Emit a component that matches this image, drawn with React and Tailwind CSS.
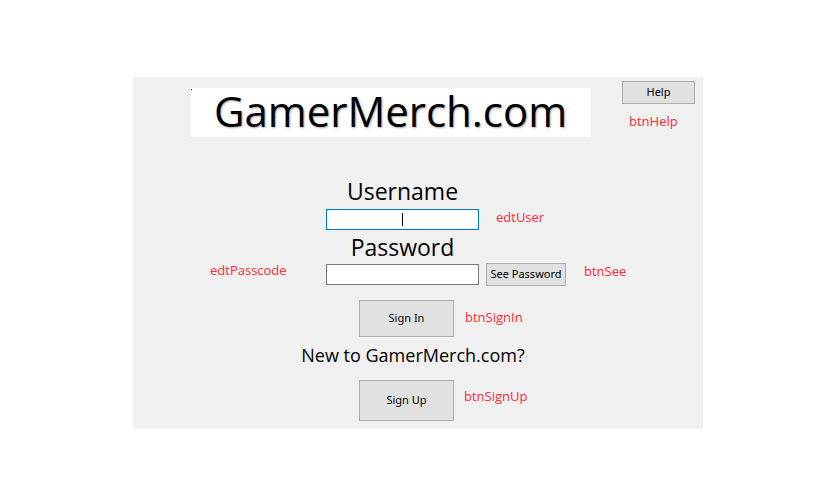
import React from "react";

const seg = { fontFamily: '"Open Sans", "Noto Sans", sans-serif' };
const tah = { fontFamily: '"Noto Sans", "DejaVu Sans", sans-serif' };

function Note({ children, className }) {
  return (
    <div
      className={`absolute text-[13px] leading-none text-[#ff2a3a] ${className}`}
      style={seg}
    >
      {children}
    </div>
  );
}

export default function App() {
  return (
    <div className="w-[819px] h-[478px] bg-white overflow-hidden pt-[77px] pl-[133px]">
      <div className="relative w-[570px] h-[352px] bg-[#f0f0f0]">
        {/* top row */}
        <div className="flex items-start">
          <div className="relative ml-[57px] mt-[11px] w-[401px] h-[49px] bg-white flex items-center justify-center">
            <div className="absolute left-[1px] top-[1px] w-[1px] h-[1px] bg-[#0000ff]" />
            <span
              className="text-[42px] leading-none text-black -mt-[3px]"
              style={{ ...seg, textShadow: "1px 1px 2px rgba(0,0,0,0.35)" }}
            >
              GamerMerch.com
            </span>
          </div>
          <button
            className="ml-[31px] mt-[4px] w-[73px] h-[23px] bg-[#e1e1e1] border border-[#adadad] text-[11px] text-black flex items-center justify-center"
            style={tah}
          >
            Help
          </button>
        </div>

        {/* form column */}
        <div className="flex flex-col">
          <div
            className="ml-[193px] w-[153px] mt-[41px] h-[26px] flex items-center justify-center text-[23px] leading-none text-black"
            style={seg}
          >
            Username
          </div>
          <div className="ml-[193px] mt-[5px] w-[153px] h-[21px] bg-white border border-[#0078d7] flex items-center justify-center">
            <div className="w-[1px] h-[13px] bg-black" />
          </div>
          <div
            className="ml-[193px] w-[153px] mt-[4px] h-[27px] flex items-center justify-center text-[23px] leading-none text-black"
            style={seg}
          >
            Password
          </div>
          <div className="flex items-center mt-[2px]">
            <div className="ml-[193px] w-[153px] h-[21px] bg-white border border-[#7a7a7a]" />
            <button
              className="ml-[7px] w-[80px] h-[23px] bg-[#e1e1e1] border border-[#adadad] text-[11px] text-black flex items-center justify-center"
              style={tah}
            >
              See Password
            </button>
          </div>
          <button
            className="ml-[226px] mt-[14px] w-[95px] h-[37px] bg-[#e1e1e1] border border-[#adadad] text-[11px] text-black flex items-center justify-center"
            style={tah}
          >
            Sign In
          </button>
          <div
            className="ml-[168px] w-[224px] mt-[6px] h-[24px] flex items-center justify-center text-[18px] leading-none text-black whitespace-nowrap"
            style={seg}
          >
            New to GamerMerch.com?
          </div>
          <button
            className="ml-[226px] mt-[13px] w-[95px] h-[41px] bg-[#e1e1e1] border border-[#adadad] text-[11px] text-black flex items-center justify-center"
            style={tah}
          >
            Sign Up
          </button>
        </div>

        <Note className="left-[496px] top-[38px]">btnHelp</Note>
        <Note className="left-[363px] top-[134px]">edtUser</Note>
        <Note className="left-[77px] top-[187px]">edtPasscode</Note>
        <Note className="left-[451px] top-[188px]">btnSee</Note>
        <Note className="left-[332px] top-[234px]">btnSignIn</Note>
        <Note className="left-[331px] top-[313px]">btnSignUp</Note>
      </div>
    </div>
  );
}
